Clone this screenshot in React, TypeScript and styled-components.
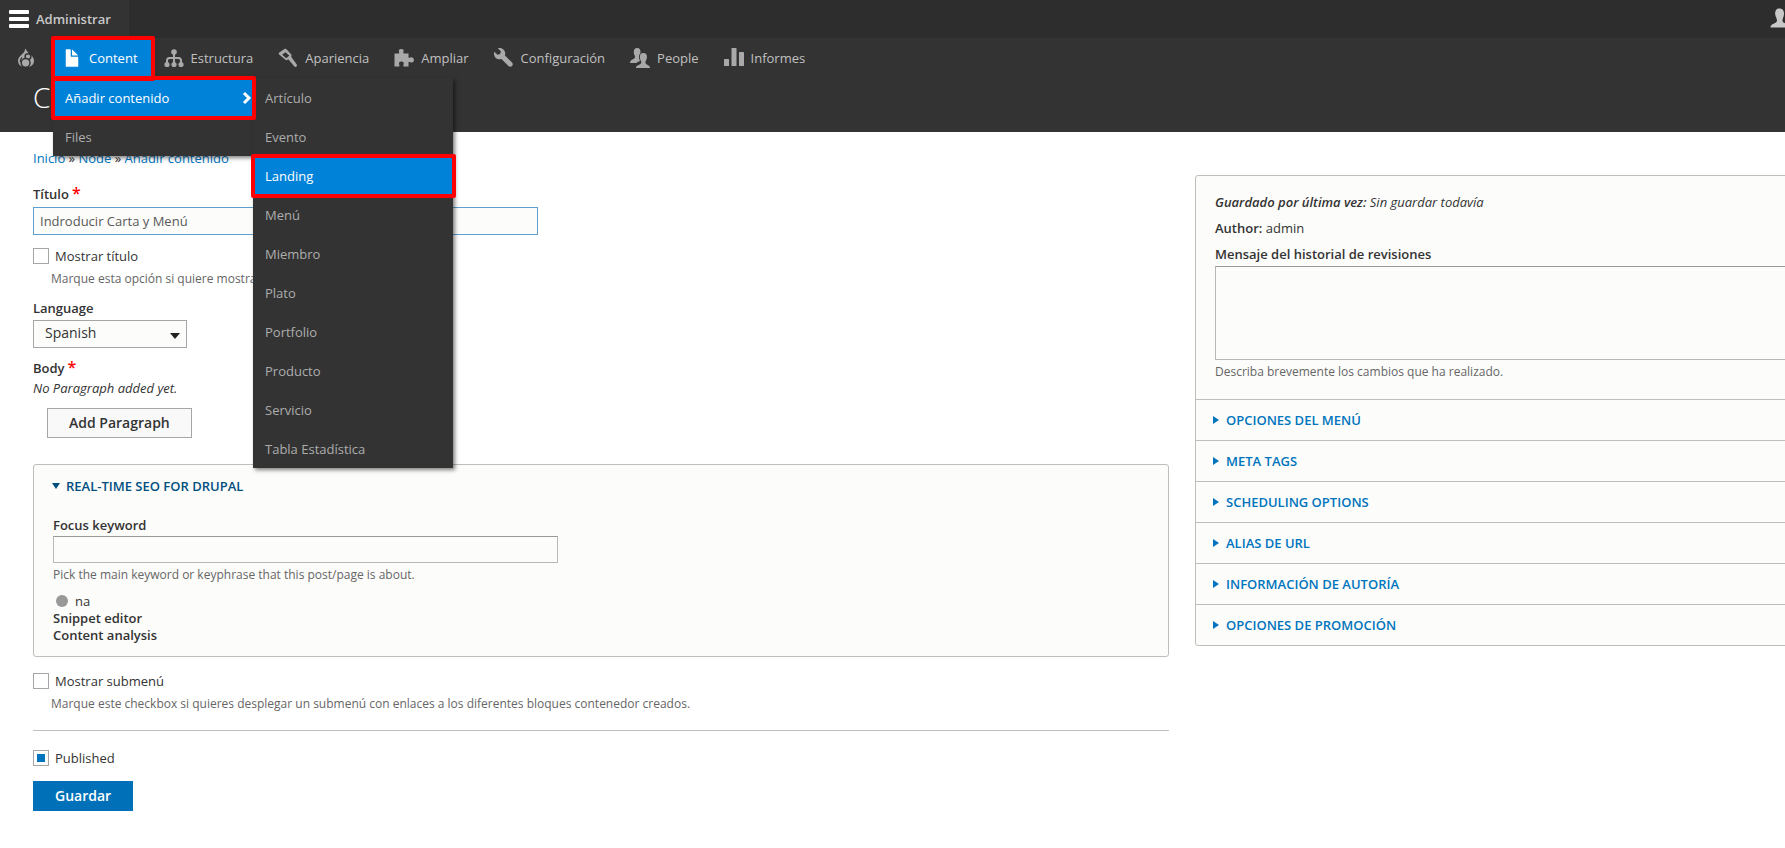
import React from "react";
import styled, { createGlobalStyle, css } from "styled-components";

const GlobalStyle = createGlobalStyle`
  *, *::before, *::after { box-sizing: border-box; }
  html, body { margin: 0; background: #fff; overflow-x: hidden; }
  body {
    font-family: "Open Sans", "Noto Sans", sans-serif;
    font-size: 13px;
    line-height: 18px;
    color: #333;
  }
  button, input, select, textarea { font-family: inherit; color: inherit; margin: 0; }
  a { color: #0074bd; text-decoration: none; }
`;

/* The admin page is a little wider than the window and runs off its right edge. */
const Page = styled.div`
  width: calc(100% + 69px);
`;

const AdminBar = styled.nav`
  display: flex;
  justify-content: space-between;
  height: 38px;
  background: #2d2d2d;
`;

const BarTab = styled.button`
  display: flex;
  align-items: center;
  gap: 7px;
  padding: 0 18px 0 9px;
  border: 0;
  background: #333;
  color: #c8c8c8;
  font-size: 13px;
  font-weight: 600;
`;

const UserTab = styled(BarTab)`
  background: transparent;
  padding: 0 64px 2px 0;
`;

const Tray = styled.nav`
  height: 40px;
  background: #333;
`;

const TrayList = styled.ul`
  display: flex;
  height: 100%;
  margin: 0;
  padding: 0;
  list-style: none;
`;

const TrayItem = styled.li`
  position: relative;
`;

const highlight = css<{ $right?: number }>`
  &::after {
    content: "";
    position: absolute;
    z-index: 3;
    inset: -2px ${(p) => p.$right ?? -3}px -3px -2px;
    border: 4px solid #f00;
    border-radius: 2px;
    pointer-events: none;
  }
`;

const TrayLink = styled.a<{ $active?: boolean; $right?: number }>`
  position: relative;
  display: flex;
  align-items: center;
  gap: 7px;
  height: 100%;
  padding: 0 ${(p) => (p.$active ? 17 : 16)}px 0 9px;
  color: ${(p) => (p.$active ? "#fff" : "#c0c0c0")};
  background: ${(p) => (p.$active ? "#0082d8" : "transparent")};
  svg { color: ${(p) => (p.$active ? "#fff" : "#a9a9a9")}; flex: none; }
  ${(p) => p.$active && highlight}
`;

const HomeLink = styled(TrayLink)`
  padding: 0 17px 0 16px;
`;

const Menu = styled.ul<{ $level: number }>`
  position: absolute;
  z-index: ${(p) => p.$level};
  top: ${(p) => (p.$level === 1 ? "100%" : "0")};
  left: ${(p) => (p.$level === 1 ? "0" : "100%")};
  width: 200px;
  margin: 0;
  padding: 0;
  list-style: none;
  background: #333;
  box-shadow: 2px 2px 4px rgba(0, 0, 0, 0.5);
`;

const MenuItem = styled.li`
  position: relative;
`;

const MenuLink = styled.a<{ $active?: boolean; $right?: number }>`
  position: relative;
  display: flex;
  align-items: center;
  justify-content: space-between;
  height: 39px;
  padding: 0 1px 0 12px;
  color: ${(p) => (p.$active ? "#fff" : "#adadad")};
  background: ${(p) => (p.$active ? "#0082d8" : "transparent")};
  ${(p) => p.$active && highlight}
`;

const Header = styled.header`
  height: 54px;
  padding: 0 33px;
  background: #333;
  color: #fff;
`;

const Title = styled.h1`
  margin: 0;
  font-size: 28px;
  line-height: 38px;
  font-weight: 300;
`;

const Breadcrumb = styled.nav`
  padding: 17px 33px 0;
  height: 43px;
`;

const Columns = styled.form`
  display: grid;
  grid-template-columns: minmax(0, 1136fr) minmax(0, 626fr);
  gap: 26px;
  align-items: start;
  padding: 0 33px;
`;

const Main = styled.div`
  padding-top: 10px;
`;

const Label = styled.label`
  display: block;
  font-weight: 600;
`;

const Required = styled.span`
  color: #f00;
  font-size: 16px;
  line-height: 1;
  margin-left: 3px;
`;

const Strong = styled.strong`
  font-weight: 600;
`;

const TextInput = styled.input<{ $focused?: boolean }>`
  display: block;
  width: 505px;
  max-width: 100%;
  height: ${(p) => (p.$focused ? 28 : 27)}px;
  padding: 0 6px;
  border: 1px solid ${(p) => (p.$focused ? "#5d9fcf" : "#b8b8b8")};
  border-top-color: ${(p) => (p.$focused ? "#5d9fcf" : "#999")};
  background: #fcfcfa;
  font-size: 13px;
  color: #595959;
  outline: none;
`;

const Field = styled.div<{ $gap?: number }>`
  margin-bottom: ${(p) => p.$gap ?? 12}px;
`;

const TitleLabel = styled(Label)`
  margin-bottom: 4px;
`;

const KeywordLabel = styled(Label)`
  margin-bottom: 2px;
`;

const CheckRow = styled.label`
  display: flex;
  align-items: center;
  gap: 6px;
  height: 18px;
`;

const Checkbox = styled.input`
  appearance: none;
  display: grid;
  place-items: center;
  width: 16px;
  height: 16px;
  border: 1px solid #a6a6a6;
  background: #fff;
  &:checked::before {
    content: "";
    width: 8px;
    height: 8px;
    background: #0074bd;
  }
`;

const Description = styled.p<{ $indent?: boolean }>`
  margin: ${(p) => (p.$indent ? "5px 0 0 18px" : "3px 0 0")};
  font-size: 12px;
  line-height: 18px;
  color: #666;
`;

const SelectBox = styled.div`
  position: relative;
  width: 154px;
  margin-top: 3px;
  &::after {
    content: "";
    position: absolute;
    right: 7px;
    top: 13px;
    border: 5px solid transparent;
    border-top: 6px solid #222;
    border-bottom: 0;
    pointer-events: none;
  }
`;

const Select = styled.select`
  appearance: none;
  display: block;
  width: 100%;
  height: 28px;
  padding: 0 24px 4px 11px;
  border: 1px solid #a6a6a6;
  border-radius: 0;
  background: #fcfcfa;
  font-size: 14px;
`;

const BodyField = styled.div`
  margin-bottom: 26px;
`;

const Note = styled.em`
  display: block;
  margin: 2px 0 11px;
`;

const Button = styled.button<{ $primary?: boolean }>`
  display: block;
  height: 30px;
  padding: 0 21px;
  border: 1px solid ${(p) => (p.$primary ? "#0071b8" : "#a6a6a6")};
  background: ${(p) => (p.$primary ? "#0071b8" : "#f9f9f9")};
  color: ${(p) => (p.$primary ? "#fff" : "#333")};
  font-size: 14px;
  font-weight: 600;
  line-height: 18px;
`;

const AddButton = styled(Button)`
  margin-left: 14px;
`;

const Details = styled.details`
  border: 1px solid #bebfb9;
  border-radius: 3px;
  background: #fcfcfa;
`;

const Summary = styled.summary<{ $open?: boolean }>`
  display: flex;
  align-items: center;
  gap: ${(p) => (p.$open ? 6 : 7)}px;
  height: 40px;
  padding: ${(p) => (p.$open ? "2px 18px 0" : "0 17px")};
  list-style: none;
  font-weight: 600;
  text-transform: uppercase;
  color: ${(p) => (p.$open ? "#004f80" : "#0074bd")};
  &::-webkit-details-marker { display: none; }
  &::before {
    content: "";
    border: 4px solid transparent;
    ${(p) =>
      p.$open
        ? "border-top: 6px solid #004f80; border-bottom: 0;"
        : "border-left: 6px solid #0074bd; border-right: 0;"}
  }
`;

const SeoBody = styled.div`
  padding: 11px 19px 12px;
`;

const Score = styled.div`
  display: flex;
  align-items: center;
  gap: 7px;
  padding: 8px 0 0 3px;
  &::before {
    content: "";
    width: 12px;
    height: 12px;
    border-radius: 50%;
    background: #999;
  }
`;

const SeoHeading = styled.div`
  font-weight: 600;
  line-height: 17px;
`;

const SubmenuField = styled(Field)`
  padding-top: 15px;
`;

const Footer = styled.footer`
  border-top: 1px solid #bebfb9;
  padding: 18px 0 37px;
`;

const SaveButton = styled(Button)`
  margin-top: 14px;
`;

const Sidebar = styled.aside`
  border: 1px solid #bebfb9;
  border-radius: 3px;
  background: #fcfcfa;
`;

const Meta = styled.div`
  padding: 17px 19px 18px;
`;

const MetaLine = styled.p`
  margin: 0 0 8px;
`;

const Revision = styled.textarea`
  display: block;
  width: 100%;
  height: 94px;
  margin-top: 3px;
  border: 1px solid #b8b8b8;
  border-top-color: #999;
  background: #fcfcfa;
  resize: none;
`;

const Group = styled.details`
  border-top: 1px solid #bebfb9;
`;

type IconProps = { children: React.ReactNode };
const Icon = ({ children }: IconProps) => (
  <svg width="20" height="20" viewBox="0 0 20 20" fill="currentColor" aria-hidden="true">
    {children}
  </svg>
);

/* A drop with two joined circles inside, outlined in the tray's colour. */
const DropIcon = () => (
  <Icon>
    <path d="M9.500 0.500Q10.500 3.500 13.500 6 18 9 18 13 17.600 19 10 19.300 2.400 19 2 13 2 9.500 5.500 6.800 9 4 9.500 0.500z" />
    <g fill="currentColor" stroke="#333" strokeWidth="1.500">
      <circle cx="12" cy="8.600" r="2.900" />
      <circle cx="9.600" cy="14.800" r="4.400" />
    </g>
    <path d="M6 9.500Q4 11.500 4.300 14" fill="none" stroke="#333" strokeWidth="1.200" />
  </Icon>
);

const HamburgerIcon = () => (
  <Icon>
    <g fill="#fff">
      <rect y="1" width="20" height="4" rx="1" />
      <rect y="8" width="20" height="4" rx="1" />
      <rect y="15" width="20" height="4" rx="1" />
    </g>
  </Icon>
);

const FileIcon = () => (
  <Icon>
    <path
      transform="scale(1.25)"
      d="M12.502 7h-5c-.276 0-.502-.225-.502-.5v-5c0-.275-.225-.5-.5-.5h-3c-.276 0-.5.225-.5.5v13.029c0 .275.225.5.5.5h9.002c.275 0 .5-.225.5-.5v-7.029c0-.275-.225-.5-.5-.5zM8.502 6h4c.275 0 .34-.159.146-.354l-4.293-4.292c-.195-.195-.353-.129-.353.146v4c0 .275.225.5.5.5z"
    />
  </Icon>
);

const StructureIcon = () => (
  <Icon>
    <circle cx="10" cy="4" r="2.800" />
    <path d="M10 5v11M3 16v-3.500q0-2.500 2.500-2.500h9q2.500 0 2.500 2.500V16" fill="none" stroke="currentColor" strokeWidth="2" />
    <circle cx="3" cy="16.500" r="2.600" />
    <circle cx="10" cy="16.500" r="2.600" />
    <circle cx="17" cy="16.500" r="2.600" />
  </Icon>
);

const BrushIcon = () => (
  <Icon>
    <path
      fillRule="evenodd"
      d="M7.200 0.600L9 1.800 13.500 6.800 13.300 9 18.600 16.200Q19.400 18 18.400 18.700 17 19.300 16 18L10.500 11.600 8 12.200 0.800 6.200Q0.400 5 1.300 4.600zM7.300 4.200L4.200 6.800 8.300 10.300 11.300 7.600z"
    />
  </Icon>
);

const PuzzleIcon = () => (
  <Icon>
    <path d="M0.500 5.500H4.700Q5.800 5.200 4.900 3.600Q4.300 1 7.300 0.900Q10.300 1 9.500 3.600Q8.700 5.200 9.900 5.500H14.500V9.300Q14.800 10.600 16 9.600Q19.800 8.600 20 11.900Q19.800 15.200 16 14.200Q14.800 13.200 14.500 14.500V18.500H9.800Q8.700 18.200 9.600 16.700Q10.400 13.600 7.400 13.500Q4.300 13.600 5.200 16.700Q6.100 18.200 5 18.500H0.500z" />
  </Icon>
);

const WrenchIcon = () => (
  <Icon>
    <path
      transform="scale(1.25)"
      d="M14.416 11.586l-5.666-5.665c.15-.449.252-.921.252-1.421 0-2.485-2.016-4.500-4.502-4.500-.505 0-.981.102-1.434.255l2.431 2.431-.588 2.196-2.196.588-2.445-2.445c-.162.464-.268.956-.268 1.475 0 2.486 2.014 4.500 4.500 4.500.5 0 .972-.102 1.421-.251l5.667 5.665c.781.781 2.047.781 2.828 0s.781-2.047 0-2.828z"
    />
  </Icon>
);

const PeopleIcon = () => (
  <Icon>
    <path d="M7.200 0C4.600 0 3.600 1.900 3.800 4.500 3.900 6.700 5 7.400 5 8.800 5 11.600 0 11.300 0 15H6.500Q7 13.700 10 12.900 9.100 11 8.900 9 8.900 6.500 10.500 5 10.800 0 7.200 0z" />
    <path d="M13.400 5C10.600 5 9.700 7 9.900 9.700 10 12 11.300 12.700 11.300 14.500 11.300 17 6 16.500 6 20H20C20 16.500 15.400 17 15.400 14.500 15.400 12.700 16.700 12 16.900 9.700 17.100 7 16.200 5 13.400 5z" />
  </Icon>
);

const ChartIcon = () => (
  <Icon>
    <rect y="11" width="5" height="7" rx="0.500" />
    <rect x="7.500" width="5" height="18" rx="0.500" />
    <rect x="15" y="4" width="5" height="14" rx="0.500" />
  </Icon>
);

const PersonIcon = () => (
  <Icon>
    <path d="M9.500 0.500C6 0.500 5 3 5.200 6.200 5.400 9 7 10 7 12.500 7 16 0.500 15 0.500 19.500H19.500C19.500 15 12.500 16 12.500 12.500 12.500 10 13.900 9 14 6.200 14.200 3 13 0.500 9.500 0.500z" />
  </Icon>
);

const ChevronIcon = () => (
  <svg width="10" height="14" viewBox="0 0 10 14" aria-hidden="true">
    <path d="M2 2l5 5-5 5" fill="none" stroke="#fff" strokeWidth="3" />
  </svg>
);

const trayItems = [
  { label: "Estructura", icon: <StructureIcon /> },
  { label: "Apariencia", icon: <BrushIcon /> },
  { label: "Ampliar", icon: <PuzzleIcon /> },
  { label: "Configuración", icon: <WrenchIcon /> },
  { label: "People", icon: <PeopleIcon /> },
  { label: "Informes", icon: <ChartIcon /> },
];

const contentTypes = [
  "Artículo",
  "Evento",
  "Landing",
  "Menú",
  "Miembro",
  "Plato",
  "Portfolio",
  "Producto",
  "Servicio",
  "Tabla Estadística",
];

const groups = [
  "Opciones del menú",
  "Meta tags",
  "Scheduling options",
  "Alias de URL",
  "Información de autoría",
  "Opciones de promoción",
];

const AdminTray = () => (
  <Tray aria-label="Administrar">
    <TrayList>
      <TrayItem>
        <HomeLink href="#" aria-label="Drupal">
          <DropIcon />
        </HomeLink>
      </TrayItem>
      <TrayItem>
        <TrayLink href="#" $active $right={0}>
          <FileIcon />
          Content
        </TrayLink>
        <Menu $level={1}>
          <MenuItem>
            <MenuLink href="#" $active>
              Añadir contenido
              <ChevronIcon />
            </MenuLink>
            <Menu $level={2}>
              {contentTypes.map((name) => (
                <MenuItem key={name}>
                  <MenuLink href="#" $active={name === "Landing"}>
                    {name}
                  </MenuLink>
                </MenuItem>
              ))}
            </Menu>
          </MenuItem>
          <MenuItem>
            <MenuLink href="#">Files</MenuLink>
          </MenuItem>
        </Menu>
      </TrayItem>
      {trayItems.map(({ label, icon }) => (
        <TrayItem key={label}>
          <TrayLink href="#">
            {icon}
            {label}
          </TrayLink>
        </TrayItem>
      ))}
    </TrayList>
  </Tray>
);

export default function App() {
  return (
    <>
      <GlobalStyle />
      <Page>
        <AdminBar aria-label="Barra de herramientas">
          <BarTab type="button">
            <HamburgerIcon />
            Administrar
          </BarTab>
          <UserTab type="button" aria-label="admin">
            <PersonIcon />
          </UserTab>
        </AdminBar>
        <AdminTray />
        <Header>
          <Title>Crear Landing</Title>
        </Header>
        <Breadcrumb aria-label="Ruta">
          <a href="#">Inicio</a> » <a href="#">Node</a> » <a href="#">Añadir contenido</a>
        </Breadcrumb>
        <Columns onSubmit={(e) => e.preventDefault()}>
          <Main>
            <Field>
              <TitleLabel htmlFor="title">
                Título
                <Required>*</Required>
              </TitleLabel>
              <TextInput id="title" type="text" defaultValue="Indroducir Carta y Menú" $focused />
            </Field>
            <Field $gap={11}>
              <CheckRow>
                <Checkbox type="checkbox" />
                Mostrar título
              </CheckRow>
              <Description $indent>Marque esta opción si quiere mostrar el título.</Description>
            </Field>
            <Field $gap={11}>
              <Label htmlFor="language">Language</Label>
              <SelectBox>
                <Select id="language" defaultValue="es">
                  <option value="es">Spanish</option>
                </Select>
              </SelectBox>
            </Field>
            <BodyField>
              <Strong>
                Body
                <Required>*</Required>
              </Strong>
              <Note>No Paragraph added yet.</Note>
              <AddButton type="button">Add Paragraph</AddButton>
            </BodyField>
            <Details open>
              <Summary $open>Real-time SEO for Drupal</Summary>
              <SeoBody>
                <KeywordLabel htmlFor="keyword">Focus keyword</KeywordLabel>
                <TextInput id="keyword" type="text" />
                <Description>Pick the main keyword or keyphrase that this post/page is about.</Description>
                <Score>na</Score>
                <SeoHeading>Snippet editor</SeoHeading>
                <SeoHeading>Content analysis</SeoHeading>
              </SeoBody>
            </Details>
            <SubmenuField $gap={17}>
              <CheckRow>
                <Checkbox type="checkbox" />
                Mostrar submenú
              </CheckRow>
              <Description $indent>
                Marque este checkbox si quieres desplegar un submenú con enlaces a los diferentes bloques contenedor
                creados.
              </Description>
            </SubmenuField>
            <Footer>
              <CheckRow>
                <Checkbox type="checkbox" defaultChecked />
                Published
              </CheckRow>
              <SaveButton type="submit" $primary>
                Guardar
              </SaveButton>
            </Footer>
          </Main>
          <Sidebar>
            <Meta>
              <MetaLine>
                <em>
                  <Strong>Guardado por última vez:</Strong> Sin guardar todavía
                </em>
              </MetaLine>
              <MetaLine>
                <Strong>Author:</Strong> admin
              </MetaLine>
              <Label htmlFor="revision">Mensaje del historial de revisiones</Label>
              <Revision id="revision" />
              <Description>Describa brevemente los cambios que ha realizado.</Description>
            </Meta>
            {groups.map((name) => (
              <Group key={name}>
                <Summary>{name}</Summary>
              </Group>
            ))}
          </Sidebar>
        </Columns>
      </Page>
    </>
  );
}
